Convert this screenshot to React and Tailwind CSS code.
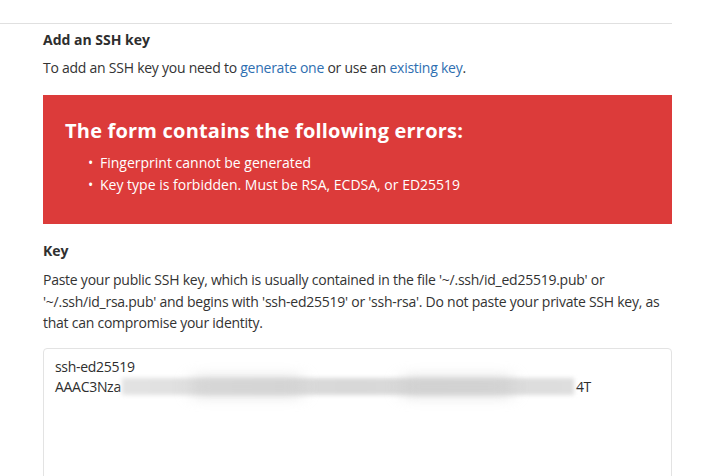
const FONT = { fontFamily: '"Open Sans", "Noto Sans", sans-serif' };

function ErrorBox() {
  return (
    <section className="mt-[17px] bg-[#dc3b3a] text-white h-[129px] pl-[22px] pt-[22px]">
      <h4 className="text-[20px] font-bold leading-[28px] tracking-[0.2px]">
        The form contains the following errors:
      </h4>
      <ul className="mt-[7px] pl-[23px] text-[14px] leading-[22px]">
        <li className="flex">
          <span className="w-[12px]">•</span>
          <span>Fingerprint cannot be generated</span>
        </li>
        <li className="flex">
          <span className="w-[12px]">•</span>
          <span>Key type is forbidden. Must be RSA, ECDSA, or ED25519</span>
        </li>
      </ul>
    </section>
  );
}

function KeyField() {
  return (
    <section className="mt-[17px]">
      <label className="block font-bold text-[14px] leading-[20px] text-[#303030]">Key</label>
      <p className="mt-[8px] text-[14px] leading-[21.5px] text-[#333] tracking-[-0.25px]">
        Paste your public SSH key, which is usually contained in the file
        '~/.ssh/id_ed25519.pub' or '~/.ssh/id_rsa.pub' and begins with
        'ssh-ed25519' or 'ssh-rsa'. Do not paste your private SSH key, as that
        can compromise your identity.
      </p>
      <div className="mt-[14px] h-[140px] border border-[#e3e3e3] rounded-[4px] px-[11px] pt-[8px] text-[14px] leading-[20px] text-[#2e2e2e] tracking-[-0.3px]">
        <div>ssh-ed25519</div>
        <div className="flex items-center">
          <span>AAAC3Nza</span>
          <span className="relative inline-block w-[452px] h-[17px] ml-[1px] overflow-visible">
            <span className="absolute inset-0 bg-gradient-to-r from-[#e3e3e3] via-[#d8d8d8] to-[#dedede] blur-[2px]" />
            <span className="absolute left-[70px] w-[110px] top-[2px] bottom-[2px] bg-[#d0d0d0] blur-[8px]" />
            <span className="absolute left-[280px] w-[110px] top-[2px] bottom-[2px] bg-[#cdcdcd] blur-[8px]" />
          </span>
          <span className="ml-[2px]">4T</span>
        </div>
      </div>
    </section>
  );
}

export default function App() {
  return (
    <div className="w-[726px] h-[476px] bg-white overflow-hidden" style={FONT}>
      <div className="w-[672px] mt-[23px] border-t border-[#e0e0e0] pl-[43px]">
        <h3 className="mt-[7px] font-bold text-[14px] leading-[18px] text-[#2e2e2e]">Add an SSH key</h3>
        <p className="mt-[9px] text-[14px] leading-[20px] text-[#333] tracking-[-0.25px]">
          To add an SSH key you need to{" "}
          <a href="#" className="text-[#2f6fb1]">generate one</a> or use an{" "}
          <a href="#" className="text-[#2f6fb1]">existing key</a>.
        </p>
        <ErrorBox />
        <KeyField />
      </div>
    </div>
  );
}
